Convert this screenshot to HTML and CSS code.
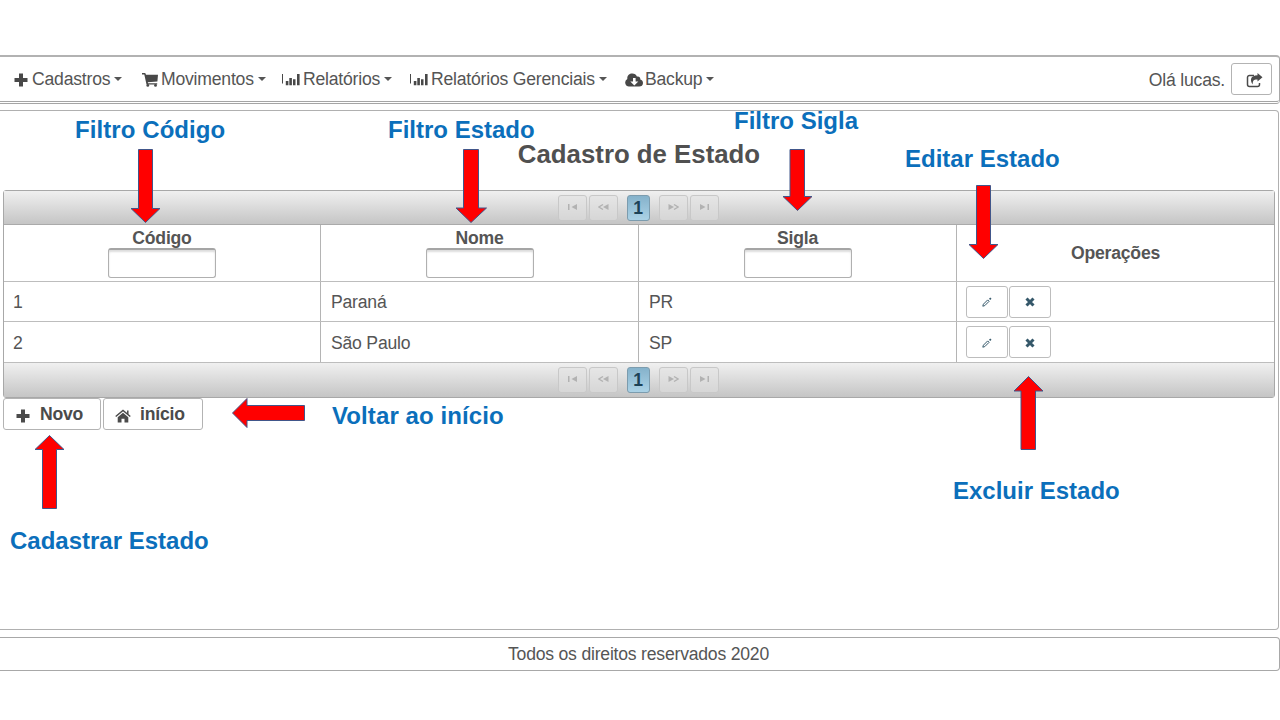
FILE: index.html
```html
<!DOCTYPE html>
<html lang="pt-BR">
<head>
<meta charset="utf-8">
<title>Cadastro de Estado</title>
<link rel="stylesheet" href="styles.css">
</head>
<body>
<svg class="defs" width="0" height="0">
  <symbol id="plus" viewBox="0 0 14 14"><path d="M5 .5h4V5h4.500v4H9v4.500H5V9H.5V5H5z"/></symbol>
  <symbol id="cart" viewBox="0 0 16 14"><path d="M0 0h3.200l.8 1.800h12l-.6 6.700-9.600.8.200.9h9.200v1.300H4.500L2.300 1.400H0z"/><circle cx="5.800" cy="12.400" r="1.400"/><circle cx="13.500" cy="12.400" r="1.400"/></symbol>
  <symbol id="chart" viewBox="0 0 18 13"><path d="M0 1h1v9.500H0zM3.800 8h2.600v4.300H3.800zM7.300 5h2.600v7.300H7.300zM11 6.200h2.500v6.100H11zM15 1h2.600v11.300H15z"/></symbol>
  <symbol id="cloud" viewBox="0 0 18 14"><path fill-rule="evenodd" d="M4 13.500A4 4 0 0 1 2.300 6 C2 2.500 4.300.5 7.200.5c2.400 0 4 1.200 4.700 3.100 2-.8 3.700.7 3.400 2.800 1.700.6 2.700 1.800 2.700 3.500 0 2.200-1.600 3.600-3.800 3.600zM8 5v3.500H5.300l4 4 4-4h-2.700V5z"/></symbol>
  <symbol id="share" viewBox="0 0 17 15"><path d="M8 2.500H3.500a2 2 0 0 0-2 2v7a2 2 0 0 0 2 2h8a2 2 0 0 0 2-2V10" fill="none" stroke="currentColor" stroke-width="1.500"/><path d="M11.500 0l5 4.300-5 4.300V6.500C8 6.300 6.500 7.500 6.800 11.500 3.500 7.500 4.500 2.300 11.500 2.300z"/></symbol>
  <symbol id="home" viewBox="0 0 16 13"><path d="M8 3.300l5.300 4.400V13H9.500V9.300h-3V13H2.700V7.700z"/><path d="M.7 7L8 .9 15.300 7M12.800 1v3.500" fill="none" stroke="currentColor" stroke-width="1.500"/></symbol>
  <symbol id="pencil" viewBox="0 0 10 10"><path d="M.8 9.200l.6-2L5.700 2.900 7.100 4.300 2.800 8.600z" fill="none" stroke="currentColor" stroke-width="1"/><path d="M7 1.800L8.300.5l1.200 1.200L8.200 3z"/></symbol>
  <symbol id="cross" viewBox="0 0 10 10"><path d="M1.500 1.500l7 7M8.500 1.500l-7 7" fill="none" stroke="currentColor" stroke-width="3"/></symbol>
  <symbol id="first" viewBox="0 0 10 6"><path d="M.5 0H2v6H.5zM9.500 0v6L4 3z"/></symbol>
  <symbol id="prev" viewBox="0 0 11 6"><path d="M5 .5L1 3l4 2.500" fill="none" stroke="currentColor" stroke-width="1.300"/><path d="M10.500 0v6L5 3z"/></symbol>
  <symbol id="next" viewBox="0 0 11 6"><path d="M.5 0v6L6 3z"/><path d="M6 .5L10 3 6 5.500" fill="none" stroke="currentColor" stroke-width="1.300"/></symbol>
  <symbol id="last" viewBox="0 0 10 6"><path d="M.5 0v6L6 3zM8 0h1.500v6H8z"/></symbol>
</svg>

<header class="topbar">
  <nav class="menu">
    <a class="item cadastros"><svg class="ic-plus"><use href="#plus"/></svg><span>Cadastros</span><i class="caret"></i></a>
    <a class="item movimentos"><svg class="ic-cart"><use href="#cart"/></svg><span>Movimentos</span><i class="caret"></i></a>
    <a class="item relatorios"><svg class="ic-chart"><use href="#chart"/></svg><span>Relatórios</span><i class="caret"></i></a>
    <a class="item gerenciais"><svg class="ic-chart"><use href="#chart"/></svg><span>Relatórios Gerenciais</span><i class="caret"></i></a>
    <a class="item backup"><svg class="ic-cloud"><use href="#cloud"/></svg><span>Backup</span><i class="caret"></i></a>
  </nav>
  <div class="user"><span>Olá lucas.</span><button class="btn logout"><svg class="ic-share"><use href="#share"/></svg></button></div>
</header>

<main class="panel">
  <h1>Cadastro de Estado</h1>
  <section class="datatable">
    <div class="paginator">
      <span class="pg"><svg><use href="#first"/></svg></span><span class="pg"><svg><use href="#prev"/></svg></span><span class="pg current">1</span><span class="pg"><svg><use href="#next"/></svg></span><span class="pg"><svg><use href="#last"/></svg></span>
    </div>
    <div class="row head">
      <div class="cell"><span>Código</span><input class="filter"></div>
      <div class="cell"><span>Nome</span><input class="filter"></div>
      <div class="cell"><span>Sigla</span><input class="filter"></div>
      <div class="cell"><span>Operações</span></div>
    </div>
    <div class="row">
      <div class="cell">1</div><div class="cell">Paraná</div><div class="cell">PR</div>
      <div class="cell ops"><button class="btn op"><svg><use href="#pencil"/></svg></button><button class="btn op"><svg><use href="#cross"/></svg></button></div>
    </div>
    <div class="row second">
      <div class="cell">2</div><div class="cell">São Paulo</div><div class="cell">SP</div>
      <div class="cell ops"><button class="btn op"><svg><use href="#pencil"/></svg></button><button class="btn op"><svg><use href="#cross"/></svg></button></div>
    </div>
    <div class="paginator bottom">
      <span class="pg"><svg><use href="#first"/></svg></span><span class="pg"><svg><use href="#prev"/></svg></span><span class="pg current">1</span><span class="pg"><svg><use href="#next"/></svg></span><span class="pg"><svg><use href="#last"/></svg></span>
    </div>
  </section>
  <div class="actions">
    <button class="btn novo"><svg class="ic-plus"><use href="#plus"/></svg><span>Novo</span></button>
    <button class="btn inicio"><svg class="ic-home"><use href="#home"/></svg><span>início</span></button>
  </div>
</main>

<footer class="footer">Todos os direitos reservados 2020</footer>

<svg class="arrows" viewBox="0 0 1280 720">
  <path d="M138.500 149.500h14v59h7.500l-14.500 14-14.500-14h7.500z"/>
  <path d="M463.500 149.500h15v58.500h8l-15.500 14.500-15-14.500h7.500z"/>
  <path d="M790 149.500h14.500v47h7.500l-14.500 14-14.500-14h7z"/>
  <path d="M976.500 185.500h14v59h7.500l-14.500 14-14.500-14h7.500z"/>
  <path d="M1028.500 376.500l14.500 14.500h-7.500v58.500h-14.500V391h-7z"/>
  <path d="M232.500 413l14.500-14.500v7h57.500v15H247v7z"/>
  <path d="M49.500 435.500L64 449.500h-7.500v59h-14v-59H35z"/>
</svg>
<div class="note n-codigo">Filtro Código</div>
<div class="note n-estado">Filtro Estado</div>
<div class="note n-sigla">Filtro Sigla</div>
<div class="note n-editar">Editar Estado</div>
<div class="note n-voltar">Voltar ao início</div>
<div class="note n-excluir">Excluir Estado</div>
<div class="note n-cadastrar">Cadastrar Estado</div>
</body>
</html>
```
FILE: styles.css
```css
* { box-sizing: border-box; }
body {
  margin: 0; padding-top: 55px; width: 1280px; height: 720px; overflow: hidden;
  position: relative; background: #fff; color: #555;
  font: 17.6px/20px "Liberation Sans", Arial, sans-serif; letter-spacing: -0.21px;
}
svg { display: block; fill: currentColor; flex: none; }
.defs { position: absolute; }

.topbar {
  height: 49px; border: 1px solid #a8a8a8; border-left: 0; border-top-width: 2px;
  border-top-color: #b2b2b2; border-bottom: 3px double #a5a5a5;
  border-radius: 0 4px 4px 0; display: flex; justify-content: space-between;
}
.menu { display: flex; padding-left: 14px; }
.item { display: flex; align-items: center; height: 43px; white-space: nowrap; }
.item svg { color: #484848; margin-top: 2px; }
.item span { display: block; }
.caret { border: 4px solid transparent; border-top-color: #555; border-bottom: 0; margin-left: 4px; }
.cadastros { width: 128px; }
.movimentos { width: 140px; }
.relatorios { width: 128px; }
.gerenciais { width: 215px; }
.ic-plus { width: 14px; height: 14px; }
.cadastros .ic-plus { margin-right: 4px; }
.ic-cart { width: 16px; height: 14px; margin-right: 3px; }
.ic-chart { width: 18px; height: 13px; margin-right: 3px; }
.ic-cloud { width: 18px; height: 14px; margin-right: 2px; }
.user { display: flex; padding: 6px 7px 0 0; gap: 6px; }
.user span { padding-top: 7px; }

.btn {
  display: flex; align-items: center; padding: 0; background: #fff; color: #4b4b4b;
  border: 1px solid #b3b3b3; border-radius: 3px;
  font: bold 17.6px/20px "Liberation Sans", Arial, sans-serif; letter-spacing: -0.21px;
}
.logout { width: 41px; height: 32px; padding-left: 14px; }
.ic-share { width: 17px; height: 15px; margin-top: 2px; }

.panel {
  width: 1279px; height: 520px; margin-top: 6px; padding: 0 3px;
  border: 1px solid #b0b0b0; border-left: 0; border-radius: 0 4px 4px 0;
}
h1 { margin: 0; padding-top: 28px; height: 79px; font-size: 25.8px; line-height: 30px; letter-spacing: 0; text-align: center; color: #505050; }
.datatable { width: 1272px; border: 1px solid #a8a8a8; border-radius: 3px; }
.paginator {
  height: 34px; display: flex; justify-content: center; align-items: center; gap: 2px; padding-right: 2px;
  background: linear-gradient(#f0f0f0, #c5c5c5); border-bottom: 1px solid #aaa;
}
.paginator.bottom { height: 34px; border: 0; }
.pg {
  width: 29px; height: 26px; border: 1px solid #c8c8c8; border-radius: 3px;
  display: flex; align-items: flex-start; justify-content: center; padding-top: 8px; color: #b2b2b2;
  background: rgba(225, 225, 225, .5);
}
.pg svg { width: 11px; height: 6px; }
.pg.current {
  width: 23px; padding: 2px 0 0; margin: 0 7px; color: #1c4257; font-weight: bold;
  background: linear-gradient(#85b2cb, #abd2e6); border-color: #7c9cae;
}
.row { display: grid; grid-template-columns: 316px 318px 318px 318px; height: 40px; border-bottom: 1px solid #bdbdbd; }
.row.second { height: 41px; }
.row.head { height: 57px; text-align: center; font-weight: bold; }
.cell { display: flex; align-items: center; border-left: 1px solid #b4b4b4; padding-left: 10px; padding-top: 1px; }
.cell:first-child { border-left: 0; padding-left: 9px; }
.head .cell, .head .cell:first-child { flex-direction: column; align-items: center; justify-content: center; padding: 0; }
.filter {
  width: 108px; height: 30px; border: 1px solid #b0b0b0; border-top: 2px solid #a5a5a5;
  border-radius: 3px; margin: 0; box-shadow: inset 0 2px 2px #ddd; background: #fff;
}
.cell.ops { padding: 0 0 0 9px; gap: 1px; }
.op { width: 42px; height: 32px; justify-content: center; color: #35586a; border-color: #bdbdbd; }
.op svg { width: 10px; height: 10px; margin-top: 1px; }
.actions { display: flex; gap: 2px; }
.novo, .inicio { height: 32px; }
.novo { width: 98px; padding-left: 12px; }
.novo .ic-plus { margin: 3px 10px 0 0; }
.inicio { width: 100px; padding-left: 11px; }
.ic-home { width: 16px; height: 14px; margin: 4px 9px 0 0; }

.footer {
  height: 34px; margin-top: 7px; padding-right: 2px; border: 1px solid #a8a8a8; border-left: 0;
  border-radius: 0 4px 4px 0; text-align: center; line-height: 33px;
}

.arrows { position: absolute; left: 0; top: 0; width: 1280px; height: 720px; fill: #f00; stroke: #41568a; stroke-width: 1; }
.note { position: absolute; font-size: 24px; line-height: 28px; letter-spacing: 0; font-weight: bold; color: #0b6fbb; white-space: nowrap; }
.n-codigo { left: 75px; top: 116px; letter-spacing: .08px; }
.n-estado { left: 388px; top: 116px; }
.n-sigla { left: 734px; top: 107px; }
.n-editar { left: 905px; top: 145px; }
.n-voltar { left: 332px; top: 402px; letter-spacing: .1px; }
.n-excluir { left: 953px; top: 477px; }
.n-cadastrar { left: 10px; top: 527px; }
```
